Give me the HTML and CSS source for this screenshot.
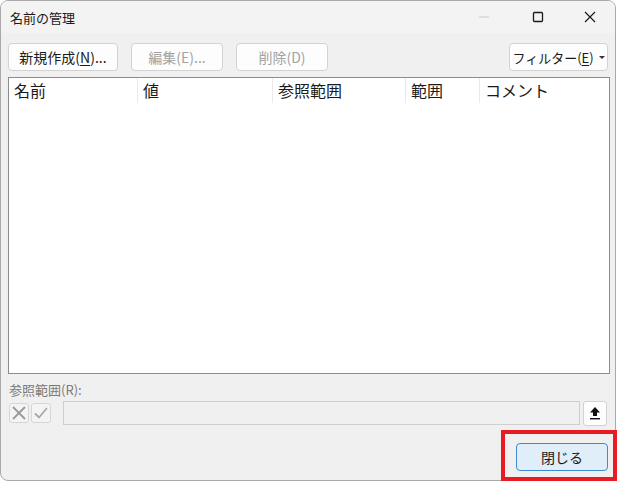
FILE: index.html
```html
<!DOCTYPE html>
<html lang="ja">
<head>
<meta charset="utf-8">
<title>名前の管理</title>
<link rel="stylesheet" href="styles.css">
</head>
<body>
<div class="window">
  <div class="titlebar">
    <span class="title">名前の管理</span>
    <div class="controls">
      <span class="ctl min"><svg width="12" height="12" viewBox="0 0 12 12"><line x1="1" y1="6" x2="11" y2="6" stroke="#c9c9c9" stroke-width="1"/></svg></span>
      <span class="ctl max"><svg width="12" height="12" viewBox="0 0 12 12"><rect x="1.5" y="1.5" width="9" height="9" rx="1" fill="none" stroke="#1a1a1a" stroke-width="1.3"/></svg></span>
      <span class="ctl close"><svg width="12" height="12" viewBox="0 0 12 12"><path d="M1 1 L11 11 M11 1 L1 11" stroke="#1a1a1a" stroke-width="1.2"/></svg></span>
    </div>
  </div>
  <div class="toolbar">
    <button class="btn new"><span class="lbl">新規作成(<u>N</u>)...</span></button>
    <button class="btn disabled edit"><span class="lbl">編集(E)...</span></button>
    <button class="btn disabled del"><span class="lbl">削除(D)</span></button>
    <span class="spacer"></span>
    <button class="btn filter"><span class="lbl">フィルター(<u>E</u>)</span><span class="caret"></span></button>
  </div>
  <div class="list">
    <div class="header">
      <div class="col c1">名前</div>
      <div class="col c2">値</div>
      <div class="col c3">参照範囲</div>
      <div class="col c4">範囲</div>
      <div class="col c5">コメント</div>
    </div>
  </div>
  <div class="refarea">
    <div class="reflabel">参照範囲(R):</div>
    <div class="refrow">
      <span class="sq"><svg width="18" height="18" viewBox="0 0 18 18"><path d="M3 3 L15 15 M15 3 L3 15" stroke="#9a9a9a" stroke-width="1.8"/></svg></span>
      <span class="sq"><svg width="18" height="18" viewBox="0 0 18 18"><path d="M3 9.5 L7 13.5 L15 4" fill="none" stroke="#a8a8a8" stroke-width="1.8"/></svg></span>
      <div class="refinput"></div>
      <span class="upbtn"><svg width="14" height="16" viewBox="0 0 14 16"><path d="M7 2 L12 7.5 H9 V11 H5 V7.5 H2 Z" fill="#111"/><rect x="2" y="13" width="10" height="1.4" fill="#111"/></svg></span>
    </div>
  </div>
  <div class="footer">
    <button class="btn primary"><span class="lbl">閉じる</span></button>
  </div>
</div>
<div class="highlight"></div>
</body>
</html>
```
FILE: styles.css
```css
html, body {
  margin: 0;
  padding: 0;
  background: #ffffff;
}
body {
  width: 619px;
  height: 484px;
  position: relative;
  overflow: hidden;
  font-family: "Noto Sans CJK JP", "Noto Sans", "Liberation Sans", sans-serif;
  color: #1a1a1a;
}
.window {
  box-sizing: border-box;
  width: 616px;
  height: 481px;
  border: 1px solid #a9a9a9;
  border-radius: 8px;
  background: #f0f0f0;
  display: flex;
  flex-direction: column;
  overflow: hidden;
}
.titlebar {
  height: 32px;
  flex: none;
  background: #f3f3f3;
  display: flex;
  align-items: center;
  padding-left: 9px;
}
.title {
  font-size: 13px;
  line-height: 1;
}
.controls {
  margin-left: auto;
  display: flex;
  height: 100%;
}
.ctl {
  width: 54px;
  display: flex;
  align-items: center;
  justify-content: center;
}
.close { width: 50px; }
.toolbar {
  display: flex;
  align-items: center;
  padding: 10px 7px 0 7px;
  height: 28px;
  flex: none;
}
.btn {
  box-sizing: border-box;
  height: 28px;
  background: #fdfdfd;
  border: 1px solid #d2d2d2;
  border-radius: 4px;
  font-family: inherit;
  font-size: 14px;
  color: #1a1a1a;
  padding: 0;
  display: flex;
  align-items: center;
  justify-content: center;
  white-space: nowrap;
}
.lbl { white-space: nowrap; }
.btn u { text-underline-offset: 2px; }
.new { width: 110px; }
.edit { width: 92px; margin-left: 13px; }
.del { width: 92px; margin-left: 13px; }
.disabled { color: #a3a3a3; }
.spacer { flex: 1; }
.filter { width: 99px; font-size: 13px; gap: 5px; }
.caret {
  width: 0; height: 0;
  border-left: 3px solid transparent;
  border-right: 3px solid transparent;
  border-top: 3px solid #333;
}
.list {
  box-sizing: border-box;
  margin: 6px 5px 0 7px;
  height: 297px;
  flex: none;
  background: #ffffff;
  border: 1px solid #8c8c8c;
}
.header {
  display: flex;
  height: 26px;
}
.col {
  box-sizing: border-box;
  font-size: 16px;
  line-height: 25px;
  padding-left: 5px;
  border-right: 1px solid #eaeaea;
  height: 25px;
  white-space: nowrap;
}
.c1 { width: 129px; }
.c2 { width: 135px; }
.c3 { width: 133px; }
.c4 { width: 74px; }
.c5 { border-right: none; flex: 1; }
.refarea {
  padding: 7px 8px 0 8px;
  flex: none;
}
.reflabel {
  font-size: 13px;
  color: #7a7a7a;
  line-height: 18px;
}
.refrow {
  display: flex;
  align-items: center;
  margin-top: 2px;
  height: 24px;
}
.sq {
  box-sizing: border-box;
  width: 20px;
  height: 20px;
  border: 1px solid #d6d6d6;
  border-radius: 3px;
  background: #f4f4f4;
  display: flex;
  align-items: center;
  justify-content: center;
  margin-right: 2px;
}
.refinput {
  box-sizing: border-box;
  margin-left: 10px;
  width: 519px;
  height: 24px;
  border: 1px solid #cfcfcf;
  background: #f0f0f0;
}
.upbtn {
  box-sizing: border-box;
  margin-left: 3px;
  width: 24px;
  height: 25px;
  border: 1px solid #d2d2d2;
  border-radius: 3px;
  background: #fdfdfd;
  display: flex;
  align-items: center;
  justify-content: center;
}
.footer {
  display: flex;
  justify-content: flex-end;
  padding: 18px 7px 0 0;
}
.primary {
  width: 92px;
  background: #e0eef9;
  border: 1px solid #3c8ad6;
}
.highlight {
  position: absolute;
  left: 501px;
  top: 430px;
  width: 116px;
  height: 51px;
  box-sizing: border-box;
  border: 4px solid #e81b23;
}
```
